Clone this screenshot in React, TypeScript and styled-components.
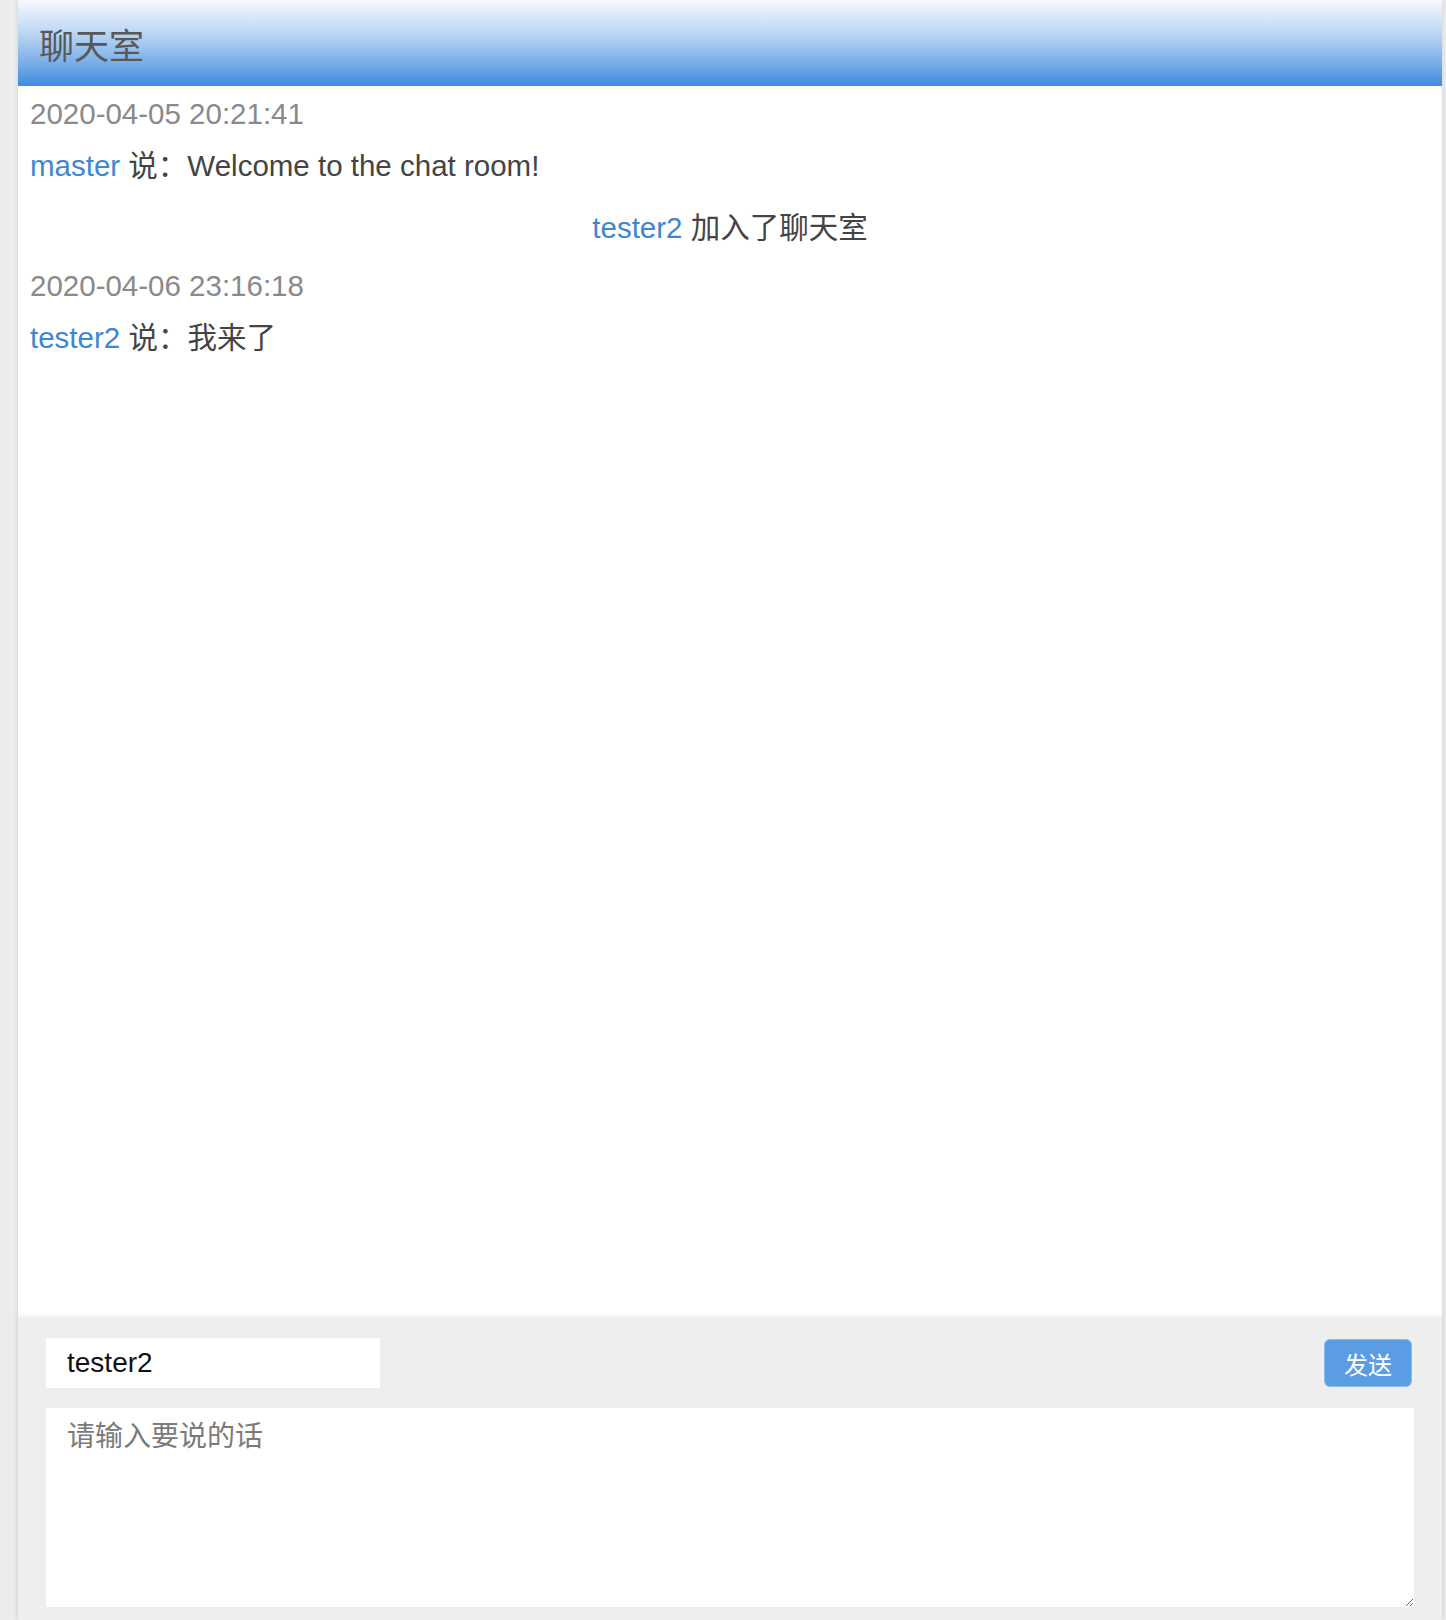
import React from 'react';
import styled, { createGlobalStyle } from 'styled-components';

const GlobalStyle = createGlobalStyle`
  html, body {
    margin: 0;
    padding: 0;
    background: #ececec;
  }
  body {
    font-family: "Liberation Sans", "Noto Sans CJK SC", sans-serif;
  }
`;

const Page = styled.div`
  height: 1620px;
  padding: 0 4px 0 18px;
  box-sizing: border-box;
`;

const Room = styled.div`
  height: 100%;
  display: flex;
  flex-direction: column;
  background: #fff;
  box-shadow: 0 0 5px rgba(0, 0, 0, 0.12);
`;

const Header = styled.div`
  height: 86px;
  flex-shrink: 0;
  display: flex;
  align-items: center;
  padding-left: 21px;
  background: linear-gradient(to bottom, #f6f9fe 0%, #b9d5f3 40%, #76abe8 75%, #3f8ae0 100%);
  color: #585858;
  font-size: 35px;
  font-family: "Noto Sans CJK SC", sans-serif;
`;

const MessageList = styled.div`
  flex: 1;
  padding: 7px 12px;
  font-size: 29.5px;
  line-height: 42px;
  color: #444;
`;

const Time = styled.div`
  color: #8a8a8a;
  margin-top: 16px;
  &:first-child {
    margin-top: 0;
  }
`;

const Said = styled.div`
  margin-top: 10px;
`;

const System = styled.div`
  margin-top: 20px;
  text-align: center;
`;

const Name = styled.span`
  color: #3f87d0;
`;

const Footer = styled.div`
  flex-shrink: 0;
  height: 302px;
  box-sizing: border-box;
  padding: 20px 28px 13px;
  background: #eeeeee;
  box-shadow: 0 -2px 4px rgba(0, 0, 0, 0.08);
  display: flex;
  flex-direction: column;
  gap: 20px;
`;

const ToolRow = styled.div`
  display: flex;
  justify-content: space-between;
  align-items: center;
`;

const NameInput = styled.input`
  width: 334px;
  height: 50px;
  box-sizing: border-box;
  border: none;
  outline: none;
  padding: 0 21px;
  font-size: 28px;
  font-family: "Liberation Sans", "Noto Sans CJK SC", sans-serif;
  color: #111;
  background: #fff;
`;

const SendButton = styled.button`
  width: 88px;
  height: 48px;
  margin-right: 2px;
  border: 1px solid #8cbcef;
  border-radius: 6px;
  background: #5b9de3;
  color: #fff;
  font-size: 24px;
  font-family: "Noto Sans CJK SC", sans-serif;
  cursor: pointer;
`;

const TextBox = styled.textarea`
  flex: 1;
  width: 100%;
  box-sizing: border-box;
  border: none;
  outline: none;
  padding: 5px 21px;
  font-size: 28px;
  line-height: 42px;
  font-family: "Noto Sans CJK SC", sans-serif;
  color: #222;
  background: #fff;
  &::placeholder {
    color: #7a7a7a;
  }
`;

export default function App() {
  return (
    <Page>
      <GlobalStyle />
      <Room>
        <Header>聊天室</Header>
        <MessageList>
          <Time>2020-04-05 20:21:41</Time>
          <Said>
            <Name>master</Name> 说：Welcome to the chat room!
          </Said>
          <System>
            <Name>tester2</Name> 加入了聊天室
          </System>
          <Time>2020-04-06 23:16:18</Time>
          <Said>
            <Name>tester2</Name> 说：我来了
          </Said>
        </MessageList>
        <Footer>
          <ToolRow>
            <NameInput defaultValue="tester2" />
            <SendButton>发送</SendButton>
          </ToolRow>
          <TextBox placeholder="请输入要说的话" />
        </Footer>
      </Room>
    </Page>
  );
}
